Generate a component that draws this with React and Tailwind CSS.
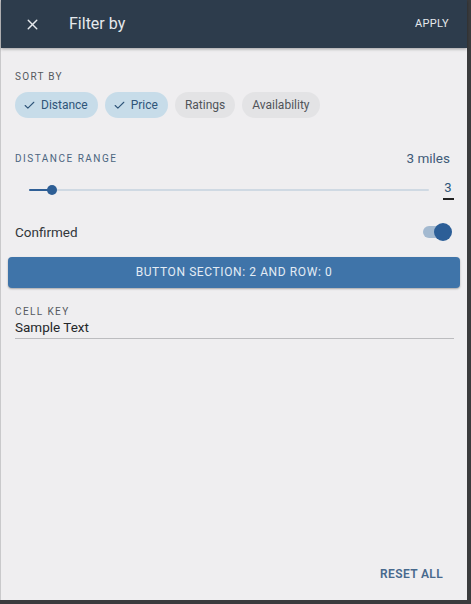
import { X, Check } from 'lucide-react';

const font = { fontFamily: 'Roboto, "Liberation Sans", sans-serif' };

const Chip = ({ label, selected }) => (
  <div
    className={`flex h-[26px] items-center gap-[5px] rounded-full pr-[10px] text-[12px] ${
      selected ? 'bg-[#c7dce9] pl-[8px] text-[#2f5579]' : 'bg-[#e3e3e5] pl-[10px] text-[#505459]'
    }`}
  >
    {selected && <Check size={13} strokeWidth={2} />}
    <span>{label}</span>
  </div>
);

const App = () => {
  return (
    <div className="flex h-[604px] w-[471px] bg-[#3a3b3d]" style={font}>
      <div className="flex h-[600px] w-[467px] flex-col border-l border-[#c9c9cb] bg-[#efeef0]">
        <header className="flex h-[48px] shrink-0 items-center bg-[#2d3c4c] pl-[23px] pr-[18px] text-[#e6e9ec] shadow-[0_1px_3px_rgba(0,0,0,0.35)]">
          <X size={17} strokeWidth={2} />
          <h1 className="ml-[28px] text-[16px]">Filter by</h1>
          <button className="ml-auto text-[11px] tracking-[0.03em]">APPLY</button>
        </header>

        <div className="flex flex-1 flex-col">
          <div className="px-[14px] pt-[21px]">
            <p className="text-[10px] tracking-[0.13em] text-[#55595e]">SORT BY</p>
            <div className="mt-[8px] flex gap-[7px]">
              <Chip label="Distance" selected />
              <Chip label="Price" selected />
              <Chip label="Ratings" />
              <Chip label="Availability" />
            </div>
          </div>

          <div className="mt-[30px] flex items-center justify-between pl-[14px] pr-[17px]">
            <p className="text-[10px] tracking-[0.15em] text-[#4b6580]">DISTANCE RANGE</p>
            <p className="text-[13.5px] text-[#3e5a78]">3 miles</p>
          </div>

          <div className="mt-[12px] flex items-center pl-[28px] pr-[13px]">
            <div className="relative h-[2px] flex-1 rounded bg-[#cfd9e3]">
              <div className="h-[2px] w-[23px] rounded bg-[#2f5f96]" />
              <div className="absolute left-[18px] top-[-4px] h-[10px] w-[10px] rounded-full bg-[#2d5e95]" />
            </div>
            <div className="ml-[13px] flex w-[12px] flex-col items-center">
              <span className="text-[13px] leading-[16px] text-[#2f5579]">3</span>
              <div className="mt-[2px] h-[2px] w-[11px] bg-[#222]" />
            </div>
          </div>

          <div className="mt-[22px] flex items-center justify-between pl-[14px] pr-[18px]">
            <span className="text-[13.5px] text-[#32363a]">Confirmed</span>
            <div className="relative h-[12px] w-[26px] rounded-full bg-[#a3b9d0]">
              <div className="absolute right-[-3px] top-[-3px] h-[18px] w-[18px] rounded-full bg-[#2c5e97]" />
            </div>
          </div>

          <div className="mt-[14px] px-[7px]">
            <button className="flex h-[31px] w-full items-center justify-center rounded-[4px] bg-[#3f74a9] text-[12px] tracking-[0.05em] text-[#e3ecf5] shadow-[0_1px_2px_rgba(0,0,0,0.3)]">
              BUTTON SECTION: 2 AND ROW: 0
            </button>
          </div>

          <div className="mt-[16px] pl-[14px] pr-[13px]">
            <p className="text-[10px] tracking-[0.14em] text-[#55595e]">CELL KEY</p>
            <p className="pb-[2px] text-[13.5px] leading-[17px] text-[#25282b] border-b border-[#bcbcbf]">Sample Text</p>
          </div>

          <div className="mt-auto flex justify-end pb-[17px] pr-[24px]">
            <button className="text-[12px] font-semibold tracking-[0.03em] text-[#47698d]">RESET ALL</button>
          </div>
        </div>
      </div>
    </div>
  );
};

export default App;
